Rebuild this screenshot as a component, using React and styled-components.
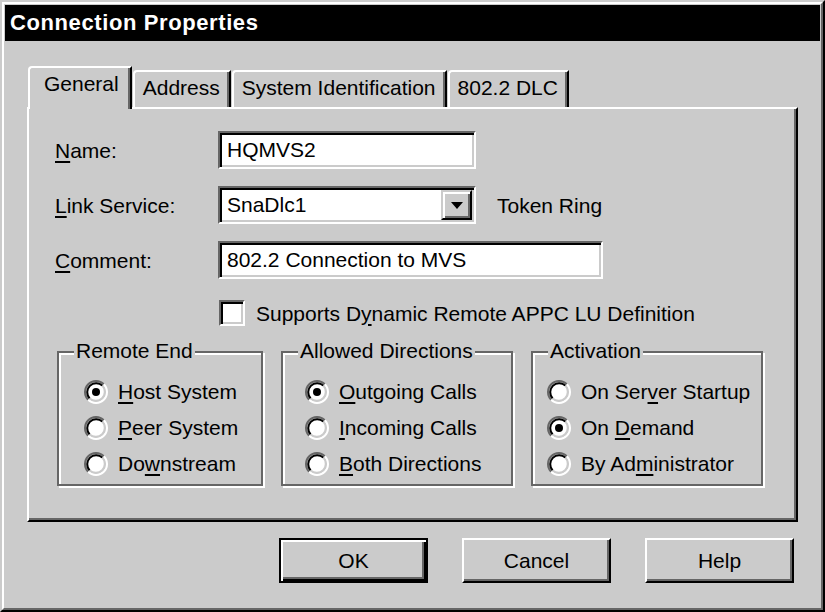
import React from 'react'
import styled, { createGlobalStyle } from 'styled-components'

const GREY = '#cbcbcb'
const DARK = '#666'

const Global = createGlobalStyle`
  html, body { margin: 0; padding: 0; background: ${GREY}; }
  body { font-family: "Liberation Sans", Arial, sans-serif; font-size: 21px; color: #000; }
  * { box-sizing: border-box; }
`

const Window = styled.div`
  width: 825px;
  height: 612px;
  border: 2px solid;
  border-color: ${GREY} #000 #000 ${GREY};
`

const Frame = styled.div`
  height: 100%;
  border: 2px solid;
  border-color: #fff ${DARK} ${DARK} #fff;
  padding: 1px;
  background: ${GREY};
  display: flex;
  flex-direction: column;
`

const TitleBar = styled.div`
  height: 36px;
  background: #000;
  color: #fff;
  font-weight: bold;
  font-size: 22px;
  letter-spacing: 0.6px;
  line-height: 36px;
  padding-left: 5px;
`

const Body = styled.div`
  padding: 25px 22px 0 22px;
  display: flex;
  flex-direction: column;
`

const Tabs = styled.div`
  display: flex;
  align-items: flex-end;
  gap: 1px;
  margin-left: 1px;
`

const Tab = styled.div`
  position: relative;
  height: ${p => (p.$active ? 43 : 37)}px;
  margin-bottom: ${p => (p.$active ? -2 : 0)}px;
  z-index: ${p => (p.$active ? 1 : 0)};
  padding: ${p => (p.$active ? '3px 11px 0 14px' : '3px 9px 0 8px')};
  background: ${GREY};
  border-top: 2px solid #fff;
  border-left: 2px solid #fff;
  border-right: 2px solid #000;
  border-top-left-radius: 4px;
  box-shadow: inset -2px 0 0 ${DARK};
  line-height: 25px;
  white-space: nowrap;
`

const Panel = styled.div`
  border: 2px solid;
  border-color: #fff #000 #000 #fff;
  box-shadow: inset -2px -2px 0 ${DARK};
  padding: 22px 26px 34px 26px;
`

const Form = styled.div`
  display: grid;
  grid-template-columns: 163px max-content 1fr;
  row-gap: 17px;
  align-items: center;
`

const Label = styled.div`
  line-height: 25px;
  white-space: nowrap;
`

const U = styled.span`
  text-decoration: underline;
  text-decoration-thickness: 2px;
  text-underline-offset: 3px;
`

const TextBox = styled.div`
  width: ${p => p.$w}px;
  height: 38px;
  background: #fff;
  border: 2px solid;
  border-color: ${DARK} #fff #fff ${DARK};
  box-shadow: inset 2px 2px 0 #000, inset -2px -2px 0 ${GREY};
  padding: 0 0 0 7px;
  display: flex;
  align-items: center;
  white-space: nowrap;
  grid-column: ${p => p.$span || 'auto'};
`

const Combo = styled(TextBox)`
  padding: 2px;
`

const ComboText = styled.div`
  flex: 1;
  padding-left: 5px;
`

const DropButton = styled.div`
  width: 31px;
  height: 30px;
  background: ${GREY};
  border: 2px solid;
  border-color: ${GREY} #000 #000 ${GREY};
  box-shadow: inset 2px 2px 0 #fff, inset -2px -2px 0 ${DARK};
  display: flex;
  align-items: center;
  justify-content: center;
`

const Note = styled.div`
  padding-left: 21px;
  line-height: 25px;
`

const CheckRow = styled.div`
  display: flex;
  align-items: center;
  gap: 11px;
  margin: 21px 0 0 164px;
  line-height: 25px;
`

const CheckBox = styled.div`
  width: 26px;
  height: 26px;
  background: #fff;
  border: 2px solid;
  border-color: ${DARK} #fff #fff ${DARK};
  box-shadow: inset 2px 2px 0 #000, inset -2px -2px 0 ${GREY};
`

const Groups = styled.div`
  display: flex;
  gap: 18px;
  margin: 25px 0 0 2px;
`

const Group = styled.div`
  position: relative;
  width: ${p => p.$w}px;
  border: 2px solid ${DARK};
  box-shadow: inset 2px 2px 0 #fff, 2px 2px 0 #fff;
  padding: 21px 0 2px ${p => p.$pad}px;
`

const GroupTitle = styled.div`
  position: absolute;
  top: -15px;
  left: 15px;
  padding: 0 2px;
  background: ${GREY};
  line-height: 25px;
  white-space: nowrap;
`

const RadioRow = styled.div`
  height: 36px;
  display: flex;
  align-items: center;
  gap: 10px;
  white-space: nowrap;
`

const ButtonRow = styled.div`
  display: flex;
  justify-content: flex-end;
  gap: 34px;
  margin-top: 16px;
  padding-right: 4px;
`

const Button = styled.div`
  width: 149px;
  height: 45px;
  display: flex;
  align-items: center;
  justify-content: center;
  background: ${GREY};
  border: 2px solid;
  border-color: ${p => (p.$default ? '#000' : '#fff #000 #000 #fff')};
  box-shadow: ${p =>
    p.$default
      ? `inset 2px 2px 0 #fff, inset -2px -2px 0 #000, inset -4px -4px 0 ${DARK}`
      : `inset -2px -2px 0 ${DARK}`};
`

const Radio = ({ checked }) => (
  <svg width="24" height="24" viewBox="0 0 24 24">
    <circle cx="12" cy="12" r="9" fill="#fff" />
    <path d="M19.78 4.22 A11 11 0 0 0 4.22 19.78" stroke={DARK} strokeWidth="2" fill="none" />
    <path d="M19.78 4.22 A11 11 0 0 1 4.22 19.78" stroke="#fff" strokeWidth="2" fill="none" />
    <path d="M18.36 5.64 A9 9 0 0 0 5.64 18.36" stroke="#000" strokeWidth="2" fill="none" />
    <path d="M18.36 5.64 A9 9 0 0 1 5.64 18.36" stroke={GREY} strokeWidth="2" fill="none" />
    {checked && <circle cx="12" cy="12" r="4" fill="#000" />}
  </svg>
)

const groups = [
  {
    title: 'Remote End', w: 206, pad: 25,
    items: [
      [<><U>H</U>ost System</>, true],
      [<><U>P</U>eer System</>, false],
      [<>Do<U>w</U>nstream</>, false],
    ],
  },
  {
    title: 'Allowed Directions', w: 232, pad: 22,
    items: [
      [<><U>O</U>utgoing Calls</>, true],
      [<><U>I</U>ncoming Calls</>, false],
      [<><U>B</U>oth Directions</>, false],
    ],
  },
  {
    title: 'Activation', w: 232, pad: 14,
    items: [
      [<>On Ser<U>v</U>er Startup</>, false],
      [<>On <U>D</U>emand</>, true],
      [<>By Ad<U>m</U>inistrator</>, false],
    ],
  },
]

const tabs = ['General', 'Address', 'System Identification', '802.2 DLC']

export default function App() {
  return (
    <>
      <Global />
      <Window>
        <Frame>
          <TitleBar>Connection Properties</TitleBar>
          <Body>
            <Tabs>
              {tabs.map((t, i) => (
                <Tab key={t} $active={i === 0}>{t}</Tab>
              ))}
            </Tabs>
            <Panel>
              <Form>
                <Label><U>N</U>ame:</Label>
                <TextBox $w={258} $span="span 2">HQMVS2</TextBox>

                <Label><U>L</U>ink Service:</Label>
                <Combo $w={258}>
                  <ComboText>SnaDlc1</ComboText>
                  <DropButton>
                    <svg width="12" height="7" viewBox="0 0 12 7">
                      <path d="M0 0 H12 L6 7 Z" fill="#000" />
                    </svg>
                  </DropButton>
                </Combo>
                <Note>Token Ring</Note>

                <Label><U>C</U>omment:</Label>
                <TextBox $w={385} $span="span 2">802.2 Connection to MVS</TextBox>
              </Form>

              <CheckRow>
                <CheckBox />
                <span>Supports D<U>y</U>namic Remote APPC LU Definition</span>
              </CheckRow>

              <Groups>
                {groups.map(g => (
                  <Group key={g.title} $w={g.w} $pad={g.pad}>
                    <GroupTitle>{g.title}</GroupTitle>
                    {g.items.map(([label, checked], i) => (
                      <RadioRow key={i}>
                        <Radio checked={checked} />
                        <span>{label}</span>
                      </RadioRow>
                    ))}
                  </Group>
                ))}
              </Groups>
            </Panel>

            <ButtonRow>
              <Button $default>OK</Button>
              <Button>Cancel</Button>
              <Button>Help</Button>
            </ButtonRow>
          </Body>
        </Frame>
      </Window>
    </>
  )
}
